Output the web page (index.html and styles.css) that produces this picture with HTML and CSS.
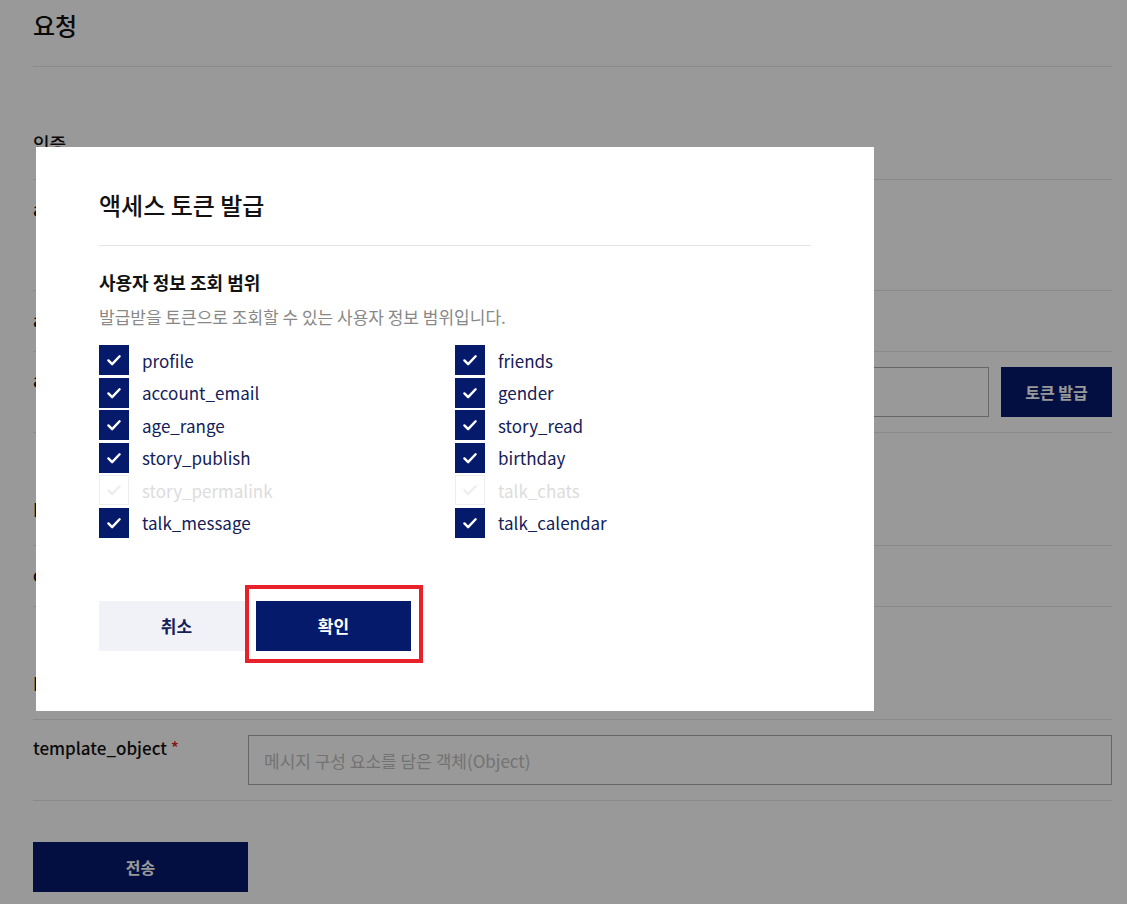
FILE: index.html
```html
<html>
    <head>
        <title>요청</title>
        <link rel="stylesheet" href="styles.css">
    </head>
    <body>
        <div class="page">
            <h1 class="page-title">요청</h1>

            <div class="section-head">인증</div>
            <div class="row row-tall">
                <span class="row-label">app_key</span>
            </div>
            <div class="row">
                <span class="row-label">admin_key</span>
            </div>
            <div class="row row-field">
                <span class="row-label">access_token</span>
                <div class="field-group">
                    <div class="text-input"></div>
                    <button class="btn-token">토큰 발급</button>
                </div>
            </div>

            <div class="section-head">Header</div>
            <div class="row">
                <span class="row-label">content_type</span>
            </div>

            <div class="section-head">Body</div>
            <div class="row row-field">
                <span class="row-label">template_object <em class="required">*</em></span>
                <div class="field-group">
                    <div class="text-input placeholder">메시지 구성 요소를 담은 객체(Object)</div>
                </div>
            </div>

            <button class="btn-send">전송</button>
        </div>

        <div class="dim"></div>

        <div class="modal">
            <h2 class="modal-title">액세스 토큰 발급</h2>
            <h3 class="scope-title">사용자 정보 조회 범위</h3>
            <p class="scope-desc">발급받을 토큰으로 조회할 수 있는 사용자 정보 범위입니다.</p>

            <div class="scope-grid">
                <label class="scope"><span class="check"><svg viewBox="0 0 30 30"><path d="M9 15.5 L13 19.5 L21 11"/></svg></span>profile</label>
                <label class="scope"><span class="check"><svg viewBox="0 0 30 30"><path d="M9 15.5 L13 19.5 L21 11"/></svg></span>friends</label>
                <label class="scope"><span class="check"><svg viewBox="0 0 30 30"><path d="M9 15.5 L13 19.5 L21 11"/></svg></span>account_email</label>
                <label class="scope"><span class="check"><svg viewBox="0 0 30 30"><path d="M9 15.5 L13 19.5 L21 11"/></svg></span>gender</label>
                <label class="scope"><span class="check"><svg viewBox="0 0 30 30"><path d="M9 15.5 L13 19.5 L21 11"/></svg></span>age_range</label>
                <label class="scope"><span class="check"><svg viewBox="0 0 30 30"><path d="M9 15.5 L13 19.5 L21 11"/></svg></span>story_read</label>
                <label class="scope"><span class="check"><svg viewBox="0 0 30 30"><path d="M9 15.5 L13 19.5 L21 11"/></svg></span>story_publish</label>
                <label class="scope"><span class="check"><svg viewBox="0 0 30 30"><path d="M9 15.5 L13 19.5 L21 11"/></svg></span>birthday</label>
                <label class="scope disabled"><span class="check"><svg viewBox="0 0 30 30"><path d="M9 15.5 L13 19.5 L21 11"/></svg></span>story_permalink</label>
                <label class="scope disabled"><span class="check"><svg viewBox="0 0 30 30"><path d="M9 15.5 L13 19.5 L21 11"/></svg></span>talk_chats</label>
                <label class="scope"><span class="check"><svg viewBox="0 0 30 30"><path d="M9 15.5 L13 19.5 L21 11"/></svg></span>talk_message</label>
                <label class="scope"><span class="check"><svg viewBox="0 0 30 30"><path d="M9 15.5 L13 19.5 L21 11"/></svg></span>talk_calendar</label>
            </div>

            <div class="modal-buttons">
                <button class="btn-cancel">취소</button>
                <button class="btn-confirm">확인</button>
            </div>
        </div>

        <div class="highlight"></div>
    </body>
</html>
```

FILE: styles.css
```css
* {
    margin: 0;
    box-sizing: border-box;
}

body {
    padding: 0;
    font-family: "Noto Sans CJK KR", "Noto Sans", sans-serif;
    color: #111;
    background-color: white;
}

button {
    font-family: inherit;
    border: none;
    cursor: pointer;
}

.page {
    width: 1112px;
    padding-left: 33px;
}

.page-title {
    height: 67px;
    padding-top: 7px;
    font-size: 24px;
    line-height: 36px;
    font-weight: 500;
    border-bottom: 1px solid #e5e5e5;
}

.section-head {
    height: 113px;
    padding-top: 63px;
    font-size: 18px;
    line-height: 26px;
    font-weight: 500;
    border-bottom: 1px solid #e5e5e5;
}

.row {
    display: flex;
    height: 61px;
    padding-top: 16px;
    border-bottom: 1px solid #e5e5e5;
}

.row-tall {
    height: 111px;
}

.row-field {
    height: 81px;
    padding-top: 15px;
}

.row-label {
    width: 215px;
    font-size: 17px;
    line-height: 26px;
    font-weight: 500;
    flex-shrink: 0;
}

.required {
    font-style: normal;
    color: #e61e1e;
}

.field-group {
    flex: 1;
    display: flex;
    gap: 12px;
}

.text-input {
    flex: 1;
    height: 50px;
    border: 1px solid #aaa;
}

.placeholder {
    padding: 0 15px;
    font-size: 17px;
    line-height: 50px;
    color: #c0c0c0;
}

.btn-token {
    width: 111px;
    height: 50px;
    background-color: #061a6b;
    color: white;
    font-size: 16px;
    font-weight: 700;
}

.btn-send {
    display: block;
    width: 215px;
    height: 50px;
    margin-top: 41px;
    background-color: #061a6b;
    color: white;
    font-size: 16px;
    font-weight: 700;
}

.dim {
    position: fixed;
    top: 0;
    left: 0;
    right: 0;
    bottom: 0;
    background-color: rgba(0, 0, 0, 0.4);
}

.modal {
    position: absolute;
    top: 147px;
    left: 36px;
    width: 838px;
    height: 564px;
    padding: 40px 63px 60px;
    background-color: white;
}

.modal-title {
    padding-bottom: 22px;
    font-size: 24px;
    line-height: 36px;
    font-weight: 500;
    color: #111;
    border-bottom: 1px solid #e5e5e5;
}

.scope-title {
    margin-top: 24px;
    font-size: 18px;
    line-height: 24px;
    font-weight: 700;
}

.scope-desc {
    margin-top: 11px;
    font-size: 17px;
    line-height: 24px;
    color: #888;
}

.scope-grid {
    display: grid;
    grid-template-columns: 356px 356px;
    row-gap: 2.5px;
    margin-top: 16px;
}

.scope {
    display: flex;
    align-items: center;
    height: 30px;
    font-size: 17px;
    color: #14205a;
}

.check {
    width: 30px;
    height: 30px;
    margin-right: 13px;
    background-color: #061a6b;
    border: 1px solid #061a6b;
}

.check svg {
    display: block;
    width: 28px;
    height: 28px;
    fill: none;
    stroke: white;
    stroke-width: 2.6;
    stroke-linecap: round;
    stroke-linejoin: round;
}

.scope.disabled {
    color: #dcdcdc;
}

.scope.disabled .check {
    background-color: white;
    border-color: #eeeeee;
}

.scope.disabled .check svg {
    stroke: #eeeeee;
}

.modal-buttons {
    display: flex;
    gap: 2px;
    margin-top: 63px;
}

.btn-cancel {
    width: 155px;
    height: 50px;
    background-color: #f1f2f8;
    color: #14205a;
    font-size: 17px;
    font-weight: 700;
}

.btn-confirm {
    width: 155px;
    height: 50px;
    background-color: #061a6b;
    color: white;
    font-size: 17px;
    font-weight: 700;
}

.highlight {
    position: absolute;
    top: 585px;
    left: 245px;
    width: 178px;
    height: 78px;
    border: 4px solid #e8202a;
    box-shadow: inset 0 0 0 7px white;
}
```
